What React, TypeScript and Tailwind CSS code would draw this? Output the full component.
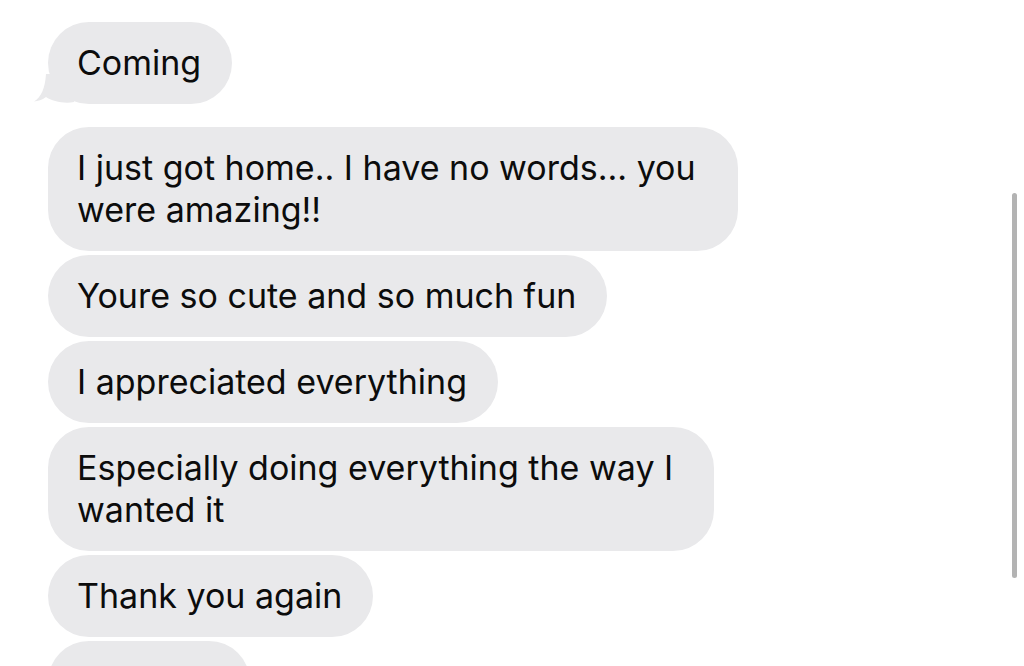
import React from "react";

const messages: { text: string; w: number }[] = [
  { text: "I just got home.. I have no words... you were amazing!!", w: 690 },
  { text: "Youre so cute and so much fun", w: 0 },
  { text: "I appreciated everything", w: 0 },
  { text: "Especially doing everything the way I wanted it", w: 666 },
  { text: "Thank you again", w: 0 },
];

function Bubble({ text, w, tail }: { text: string; w?: number; tail?: boolean }) {
  return (
    <div className="relative self-start">
      {tail && (
        <svg
          className="absolute left-[-14px] bottom-0"
          width="40"
          height="30"
          viewBox="0 0 40 30"
        >
          <path d="M40 0 L40 28 C30 30 18 27 12 23 C8 26 4 27 0 27.5 C7 23 11 15 12 0 Z" fill="#e9e9eb" />
        </svg>
      )}
      <div
        className="relative rounded-[41px] bg-[#e9e9eb] pl-[29px] pr-[31px] py-[20px] text-[34px] leading-[42px] text-[#0c0c0c]"
        style={w ? { width: w } : undefined}
      >
        {text}
      </div>
    </div>
  );
}

export default function App() {
  return (
    <div
      className="relative h-[666px] w-[1024px] overflow-hidden bg-white"
      style={{ fontFamily: "Inter, 'Noto Sans', sans-serif" }}
    >
      <div className="flex flex-col pl-[48px] pt-[22px]">
        <Bubble text="Coming" tail />
        <div className="h-[23px]" />
        <div className="flex flex-col gap-[4px]">
          {messages.map((m, i) => (
            <Bubble key={i} text={m.text} w={m.w || undefined} />
          ))}
          <div className="h-[82px] w-[202px] rounded-[41px] bg-[#e9e9eb]" />
        </div>
      </div>
      <div className="absolute right-[7px] top-[193px] h-[385px] w-[5px] rounded-full bg-[#b3b3b3]" />
    </div>
  );
}
